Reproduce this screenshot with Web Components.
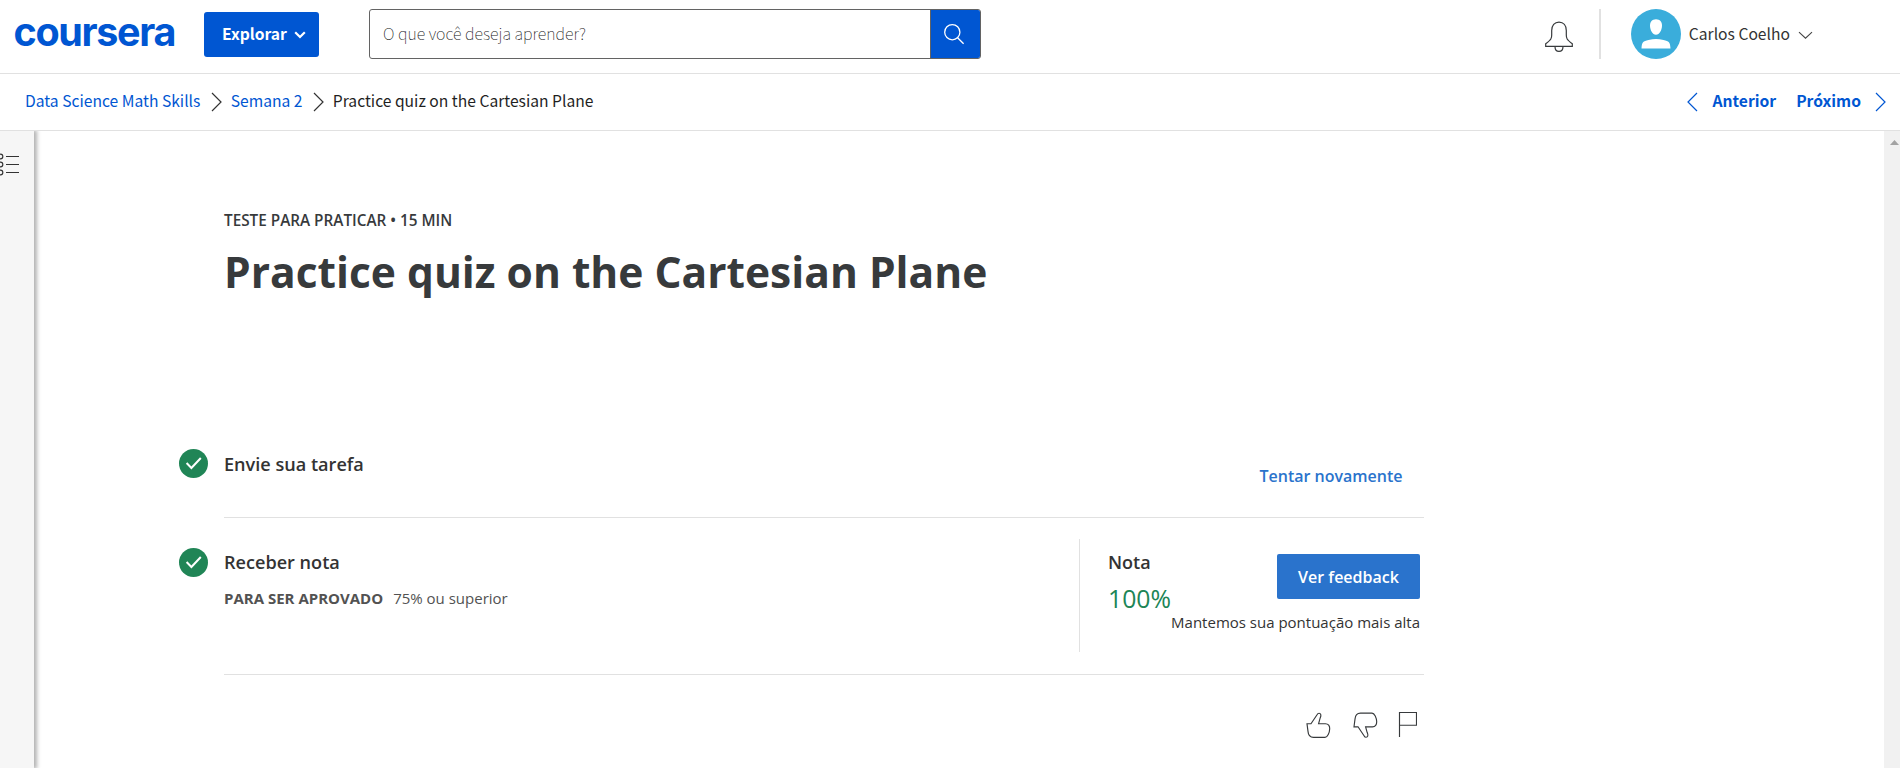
<!DOCTYPE html>
<html lang="pt-BR">
<head>
<meta charset="utf-8">
<title>Practice quiz on the Cartesian Plane</title>
<style>
html, body { margin: 0; height: 100%; overflow: hidden; background: #fff; }
body { font-family: "Noto Sans CJK SC", sans-serif; font-size: 15.65px; color: #1f1f1f; }
</style>
</head>
<body>
<quiz-page></quiz-page>
<script>
const define = (name, html) => {
  const template = document.createElement('template');
  template.innerHTML = html;
  customElements.define(name, class extends HTMLElement {
    constructor() {
      super();
      this.attachShadow({ mode: 'open' }).append(template.content.cloneNode(true));
    }
  });
};

define('brand-logo', `
<style>
:host { display: block; width: 190px; height: 50px; box-sizing: border-box; padding-left: 13.500px; color: #0056d2; }
span { display: block; font: 700 39.5px/50px Inter, sans-serif; letter-spacing: -1.35px; white-space: nowrap; }
</style><span>coursera</span>`);

define('explore-button', `
<style>
:host { display: block; flex: none; }
button { box-sizing: border-box; width: 115px; height: 45px; padding: 0 13px 2px 18px; border: 0; border-radius: 3px;
  background: #0056d2; color: #fff; font: inherit; font-weight: 700; display: flex; align-items: center; justify-content: space-between; }
svg { margin-top: 3px; }
</style>
<button><slot></slot><svg width="12" height="8" fill="none" stroke="#fff" stroke-width="2.2"><path d="M1.2 1.2 6 6l4.8-4.8"/></svg></button>`);

define('search-box', `
<style>
:host { display: flex; box-sizing: border-box; width: 612px; height: 50px; border: 1px solid #636363; border-radius: 3px; overflow: hidden; }
.field { flex: 1; padding: 0 0 2px 13px; display: flex; align-items: center; font-weight: 100; font-size: 16px; color: #111; }
.go { width: 50px; background: #0056d2; border-left: 1px solid #636363; display: flex; align-items: center; justify-content: center; padding: 0 3px 0 0; box-sizing: border-box; }
</style>
<div class="field"><slot></slot></div>
<div class="go"><svg width="22" height="22" fill="none" stroke="#fff" stroke-width="1.3"><circle cx="9.3" cy="9.2" r="7.6"/><path d="m14.6 14.7 6 6"/></svg></div>`);

define('user-menu', `
<style>
:host { display: flex; align-items: center; color: #333; white-space: nowrap; }
.bell { display: block; margin-top: 3px; }
.line { width: 2px; height: 50px; background: #e1e1e1; margin: 0 30px 0 25px; }
.name { margin-left: 7.800px; width: 102.200px; padding-bottom: 2px; font-weight: 400; }
.chev { margin: 2px 0 0 7px; }
</style>
<svg class="bell" width="30" height="32" fill="none" stroke="#373a3c" stroke-width="1.2"><path d="M1.7 27v-2.6c5.700-4.500 6-5.400 6-8.800V11.200c0-5 2.800-8.500 7.300-8.500s7.300 3.500 7.300 8.500v4.400c0 3.400.3 4.300 6 8.800V27zM11 27c0 3 1.500 5 4 5s4-2 4-5" transform="translate(0 -.6)"/></svg>
<span class="line"></span>
<svg width="50" height="50"><circle cx="25" cy="25" r="25" fill="#3aaddb"/><path fill="#fff" d="M25 10.200c4 0 6 2.800 6 6.300 0 4.500-2.500 9.200-6 9.200s-6-4.700-6-9.200c0-3.500 2-6.300 6-6.300zM17.500 31.100c5.500-1.500 9.500-1.500 15 0 5.500 1.200 6.600 2 7 8.300h-29c.4-6.300 1.500-7.100 7-8.300z"/></svg>
<span class="name"><slot></slot></span>
<svg class="chev" width="15" height="9" fill="none" stroke="#444" stroke-width="1.1"><path d="m1 1.200 6.500 6 6.500-6"/></svg>`);

define('site-header', `
<style>
:host { display: flex; height: 74px; box-sizing: border-box; border-bottom: 1px solid #e1e1e1; padding: 9px 87px 14px 0; align-items: flex-start; background: #fff; }
brand-logo { margin-top: -2px; }
explore-button { margin: 3px 50px 0 14px; }
user-menu { margin-left: auto; }
</style>
<brand-logo></brand-logo><explore-button>Explorar</explore-button>
<search-box>O que você deseja aprender?</search-box>
<user-menu>Carlos Coelho</user-menu>`);

define('lesson-nav', `
<style>
:host { display: flex; height: 57px; box-sizing: border-box; border-bottom: 1px solid #e1e1e1; padding: 0 14px 4px 25px; align-items: center; white-space: nowrap; }
a { color: #0056d2; }
svg { fill: none; stroke: #333; stroke-width: 1.2; margin-top: 3px; }
.crumb { margin-left: 10.500px; margin-right: 8.800px; }
.next { margin-left: auto; display: flex; align-items: center; font-weight: 700; color: #0056d2; }
.next svg { stroke: #0056d2; }
</style>
<a>Data Science Math Skills</a>
<svg class="crumb" width="11" height="20"><path d="m1 1 9 9-9 9"/></svg>
<a>Semana 2</a>
<svg class="crumb" width="11" height="20"><path d="m1 1 9 9-9 9"/></svg>
<span>Practice quiz on the Cartesian Plane</span>
<div class="next"><svg width="11" height="20"><path d="m10 1-9 9 9 9"/></svg><span style="margin:0 20px 0 15px">Anterior</span><span>Próximo</span><svg style="margin-left:14px" width="11" height="20"><path d="m1 1 9 9-9 9"/></svg></div>`);

define('side-rail', `
<style>
:host { display: block; flex: none; width: 34px; height: 100%; background: #f6f6f6; box-shadow: 2px 0 4px 1px rgba(0,0,0,.3); clip-path: inset(0 -9px 0 0); }
svg { display: block; margin-top: 22px; }
</style>
<svg width="20" height="24" fill="none" stroke="#333" stroke-width="1.2"><circle cx="0.500" cy="3.500" r="2.300"/><circle cx="0.500" cy="11.500" r="2.300"/><circle cx="0.500" cy="19.500" r="2.300"/><path d="M6 3.500h13M6 11.500h13M6 19.500h13"/></svg>`);

define('check-mark', `
<style>:host { display: block; flex: none; width: 29px; height: 29px; } svg { display: block; }</style>
<svg width="29" height="29" fill="none"><circle cx="14.500" cy="14.500" r="14.500" fill="#208556"/><path d="m7.600 14 4.800 5 9.400-10" stroke="#fff" stroke-width="2"/></svg>`);

define('quiz-step', `
<style>
:host { display: flex; margin-left: -44.800px; box-sizing: border-box; }
check-mark { margin-right: 15.800px; }
.row { flex: 1; display: flex; justify-content: space-between; border-bottom: 1px solid #e1e1e1; }
h2 { margin: 0; font: 600 18.1px/24px "Open Sans", sans-serif; color: #333; }
.main { padding-top: var(--title-offset, 2px); }
</style>
<check-mark></check-mark>
<div class="row"><div class="main"><h2><slot name="title"></slot></h2><slot></slot></div><slot name="side"></slot></div>`);

define('pass-rule', `
<style>
:host { display: block; margin-top: 13.500px; font-size: 15px; line-height: 20px; color: #525252; white-space: nowrap; }
b { font-weight: 700; margin-right: 10px; }
</style><b>PARA SER APROVADO</b><slot></slot>`);

define('retry-link', `
<style>:host { display: block; padding: 15px 21.500px 0 0; font-weight: 600; font-size: 16px; line-height: 24px; color: #2a73cc; }</style><slot></slot>`);

define('grade-panel', `
<style>
:host { display: flex; box-sizing: border-box; height: 113px; width: 345px; margin-top: -9px; border-left: 1px solid #e1e1e1; padding: 0 4px 0 28px; white-space: nowrap; }
.grade { padding-top: 11px; width: 63px; flex: none; }
.t { font: 600 18px/24px "Open Sans", sans-serif; color: #333; }
.n { font-size: 24.8px; line-height: 34px; margin-top: 7px; color: #208556; font-weight: 400; }
.act { flex: 1; display: flex; flex-direction: column; align-items: flex-end; padding-top: 15px; }
button { width: 143px; height: 45px; border: 0; border-radius: 2px; background: #2a73cc; color: #fff; font: 600 16px/24px "Open Sans", sans-serif; padding: 0; }
.note { font-size: 15px; line-height: 20px; margin-top: 13px; color: #333; }
</style>
<div class="grade"><div class="t">Nota</div><div class="n">100%</div></div>
<div class="act"><button>Ver feedback</button><div class="note">Mantemos sua pontuação mais alta</div></div>`);

define('feedback-icons', `
<style>:host { display: flex; justify-content: flex-end; gap: 22px; padding: 37px 7px 0 0; } svg { display: block; fill: none; stroke: #373a3c; stroke-width: 1.15; }</style>
<svg width="25" height="26"><path d="M1 11.700h4L11.200 2.500c.7-1.500 3-1.800 3.600.2.300 1-.1 2.300-.7 3.500L12.600 11.700h6.900c2.800 0 4.300 2.300 4.200 5-.1 3.800-2.200 8.700-4.700 8.700H7.500c-4.300 0-5.300-3.400-5.500-6z"/></svg>
<svg width="25" height="26" style="margin-right:-2px"><path transform="matrix(1 0 0 -1 0 26.500)" d="M1 11.700h4L11.200 2.500c.7-1.500 3-1.800 3.600.2.300 1-.1 2.300-.7 3.500L12.600 11.700h6.900c2.800 0 4.300 2.300 4.200 5-.1 3.800-2.200 8.700-4.700 8.700H7.500c-4.300 0-5.300-3.400-5.500-6z"/></svg>
<svg width="19" height="26"><path d="M1.500 25V.500h17V13.200h-17"/></svg>`);

define('quiz-main', `
<style>
:host { display: block; flex: 1; font-family: "Open Sans", sans-serif; }
.wrap { margin-left: 190px; width: 1200px; padding-top: 79px; }
.kind { font-size: 15.3px; line-height: 20px; font-weight: 620; color: #373a3c; }
h1 { margin: 14px 0 149px; font-size: 42.52px; line-height: 56px; font-weight: 700; color: #373a3c; white-space: nowrap; }
.one { height: 69px; --title-offset: 3px; }
.two { margin-top: 30px; height: 127px; }
</style>
<div class="wrap">
<div class="kind">TESTE PARA PRATICAR • 15 MIN</div>
<h1>Practice quiz on the Cartesian Plane</h1>
<quiz-step class="one"><span slot="title">Envie sua tarefa</span><retry-link slot="side">Tentar novamente</retry-link></quiz-step>
<quiz-step class="two"><span slot="title">Receber nota</span><pass-rule>75% ou superior</pass-rule><grade-panel slot="side"></grade-panel></quiz-step>
<feedback-icons></feedback-icons>
</div>`);

define('scroll-track', `
<style>:host { display: block; flex: none; width: 16px; height: 100%; background: #f1f1f1; } svg { display: block; margin: 9px 0 0 6px; }</style>
<svg width="9" height="5"><path d="M4.500 0 9 5H0z" fill="#a3a3a3"/></svg>`);

define('quiz-page', `
<style>
:host { display: flex; flex-direction: column; height: 768px; }
.body { flex: 1; min-height: 0; display: flex; overflow: hidden; }
</style>
<site-header></site-header><lesson-nav></lesson-nav>
<div class="body"><side-rail></side-rail><quiz-main></quiz-main><scroll-track></scroll-track></div>`);
</script>
</body>
</html>
